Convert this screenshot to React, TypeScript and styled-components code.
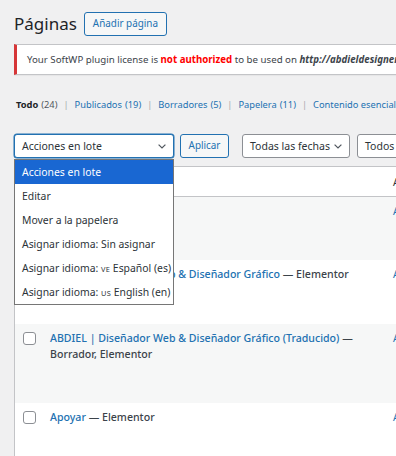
import styled, { createGlobalStyle } from "styled-components";

const GlobalStyle = createGlobalStyle`
  html, body {
    margin: 0;
    padding: 0;
    background: #f0f0f1;
    overflow: hidden;
  }
  body {
    width: 396px;
    height: 456px;
    font-family: "Noto Sans", "Open Sans", sans-serif;
    color: #3c434a;
  }
`;

const Page = styled.div`
  width: 640px;
  padding-left: 14px;
`;

/* ── Header ── */

const Header = styled.div`
  display: flex;
  align-items: center;
  gap: 7px;
  height: 24px;
  margin-top: 12px;
`;

const Title = styled.h1`
  margin: 0;
  font-size: 17px;
  font-weight: 400;
  line-height: 24px;
  color: #1d2327;
`;

const OutlineButton = styled.button`
  height: 24px;
  padding: 0 8px;
  border: 1px solid #2271b1;
  border-radius: 3px;
  background: #f6f7f7;
  color: #2271b1;
  font-family: inherit;
  font-size: 9.9px;
  line-height: 1;
  cursor: pointer;
`;

/* ── Notice ── */

const Notice = styled.div`
  box-sizing: border-box;
  width: 600px;
  height: 31px;
  margin-top: 8px;
  display: flex;
  align-items: center;
  padding: 0 10px;
  background: #fff;
  border: 1px solid #c3c4c7;
  border-left: 3px solid #d63638;
  box-shadow: 0 1px 1px rgba(0, 0, 0, 0.04);
  font-size: 9.7px;
  white-space: nowrap;
  color: #3c434a;
`;

const Danger = styled.strong`
  color: #f00;
  font-weight: 700;
`;

const Url = styled.em`
  font-weight: 700;
  color: #3c434a;
`;

/* ── Status filters ── */

const Filters = styled.ul`
  display: flex;
  margin: 22px 0 0;
  padding: 0 0 0 2px;
  list-style: none;
  font-size: 9.3px;
  line-height: 16px;
  white-space: nowrap;
  color: #646970;
`;

const FilterItem = styled.li`
  display: flex;
  gap: 3px;
`;

const FilterLink = styled.a<{ $current?: boolean }>`
  color: ${(p) => (p.$current ? "#1d2327" : "#2271b1")};
  font-weight: ${(p) => (p.$current ? 700 : 400)};
  text-decoration: none;
`;

const Count = styled.span<{ $current?: boolean }>`
  color: ${(p) => (p.$current ? "#50575e" : "#2271b1")};
  font-weight: 400;
`;

const Sep = styled.span`
  color: #a7aaad;
  padding: 0 6px 0 3px;
`;

/* ── Table nav ── */

const TableNav = styled.div`
  display: flex;
  align-items: center;
  height: 24px;
  margin-top: 21px;
`;

const BulkWrap = styled.div`
  position: relative;
  display: flex;
  gap: 6px;
  margin-right: 13px;
`;

const FilterWrap = styled.div`
  display: flex;
  gap: 7px;
`;

const Select = styled.div<{ $focused?: boolean; $width: number }>`
  box-sizing: border-box;
  width: ${(p) => p.$width}px;
  height: 24px;
  display: flex;
  align-items: center;
  justify-content: space-between;
  padding: 0 7px;
  background: #fff;
  border: 1px solid ${(p) => (p.$focused ? "#2271b1" : "#8c8f94")};
  box-shadow: ${(p) => (p.$focused ? "0 0 0 0.5px #2271b1" : "none")};
  border-radius: 3px;
  font-size: 10.5px;
  color: #2c3338;
  white-space: nowrap;
`;

const Chevron = () => (
  <svg width="8" height="5" viewBox="0 0 8 5" fill="none">
    <path d="M0.6 0.6 L4 4 L7.4 0.6" stroke="#50575e" strokeWidth="1.2" />
  </svg>
);

const ApplyButton = styled(OutlineButton)`
  width: 49px;
  padding: 0;
`;

const Dropdown = styled.ul`
  position: absolute;
  top: 25px;
  left: 0;
  z-index: 5;
  box-sizing: border-box;
  width: 160px;
  margin: 0;
  padding: 0;
  list-style: none;
  background: #fff;
  border: 1px solid #767676;
`;

const Option = styled.li<{ $active?: boolean }>`
  height: 24px;
  line-height: 24px;
  padding-left: 7px;
  font-size: 10.4px;
  white-space: nowrap;
  overflow: hidden;
  background: ${(p) => (p.$active ? "#1967d2" : "#fff")};
  color: ${(p) => (p.$active ? "#fff" : "#2c3338")};
`;

const Flag = styled.span`
  font-size: 7.4px;
  letter-spacing: 0.3px;
`;

/* ── Table ── */

const Table = styled.div`
  margin-top: 8px;
  background: #fff;
  border: 1px solid #c3c4c7;
  border-right: 0;
`;

const HeadRow = styled.div`
  display: grid;
  grid-template-columns: 29px 341px 1fr;
  align-items: center;
  height: 29px;
  border-bottom: 1px solid #c3c4c7;
  font-size: 10.4px;
  color: #2c3338;
`;

const Row = styled.div<{ $striped?: boolean; $height: number }>`
  display: grid;
  grid-template-columns: 29px 341px 1fr;
  align-items: start;
  height: ${(p) => p.$height}px;
  background: ${(p) => (p.$striped ? "#f6f7f7" : "#fff")};
`;

const CheckCell = styled.div<{ $head?: boolean }>`
  padding: ${(p) => (p.$head ? "0 0 0 8px" : "8px 0 0 8px")};
`;

const Checkbox = styled.span`
  display: block;
  box-sizing: border-box;
  width: 13px;
  height: 13px;
  background: #fff;
  border: 1px solid #8c8f94;
  border-radius: 3px;
`;

const TitleCell = styled.div`
  padding: 6px 8px 0 6px;
  font-size: 10.6px;
  line-height: 16px;
  font-weight: 500;
`;

const HeadTitle = styled.div`
  padding-left: 6px;
`;

const RowTitle = styled.a`
  color: #2271b1;
  text-decoration: none;
`;

const PostState = styled.span`
  color: #3c434a;
`;

const AuthorCell = styled.div`
  padding: 6px 0 0 8px;
  font-size: 10.4px;
  line-height: 16px;
  color: #2271b1;
  white-space: nowrap;
`;

const HeadAuthor = styled.div`
  padding-left: 8px;
`;

const rows = [
  { title: "Inicio", state: "Elementor", height: 63 },
  { title: "ABDIEL | Diseñador Web & Diseñador Gráfico", state: "Elementor", height: 64 },
  {
    title: "ABDIEL | Diseñador Web & Diseñador Gráfico (Traducido)",
    state: "Borrador, Elementor",
    height: 79,
  },
  { title: "Apoyar", state: "Elementor", height: 70 },
];

const filters = [
  { label: "Todo", count: 24, current: true },
  { label: "Publicados", count: 19 },
  { label: "Borradores", count: 5 },
  { label: "Papelera", count: 11 },
  { label: "Contenido esencial" },
];

export default function App() {
  return (
    <>
      <GlobalStyle />
      <Page>
        <Header>
          <Title>Páginas</Title>
          <OutlineButton>Añadir página</OutlineButton>
        </Header>

        <Notice>
          Your SoftWP plugin license is&nbsp;<Danger>not authorized</Danger>&nbsp;to be used on&nbsp;
          <Url>http://abdieldesigner.com</Url>
        </Notice>

        <Filters>
          {filters.map((f, i) => (
            <FilterItem key={f.label}>
              <FilterLink $current={f.current}>{f.label}</FilterLink>
              {f.count !== undefined && <Count $current={f.current}>({f.count})</Count>}
              {i < filters.length - 1 && <Sep>|</Sep>}
            </FilterItem>
          ))}
        </Filters>

        <TableNav>
          <BulkWrap>
            <Select $focused $width={160}>
              Acciones en lote
              <Chevron />
            </Select>
            <ApplyButton>Aplicar</ApplyButton>
            <Dropdown>
              <Option $active>Acciones en lote</Option>
              <Option>Editar</Option>
              <Option>Mover a la papelera</Option>
              <Option>Asignar idioma: Sin asignar</Option>
              <Option>
                Asignar idioma: <Flag>VE</Flag> Español (es)
              </Option>
              <Option>
                Asignar idioma: <Flag>US</Flag> English (en)
              </Option>
            </Dropdown>
          </BulkWrap>
          <FilterWrap>
            <Select $width={108}>
              Todas las fechas
              <Chevron />
            </Select>
            <Select $width={150}>
              Todos los idiomas
              <Chevron />
            </Select>
          </FilterWrap>
        </TableNav>

        <Table>
          <HeadRow>
            <CheckCell $head>
              <Checkbox />
            </CheckCell>
            <HeadTitle>Título</HeadTitle>
            <HeadAuthor>Autor</HeadAuthor>
          </HeadRow>
          {rows.map((r, i) => (
            <Row key={i} $striped={i % 2 === 0} $height={r.height}>
              <CheckCell>
                <Checkbox />
              </CheckCell>
              <TitleCell>
                <RowTitle>{r.title}</RowTitle>
                <PostState> — {r.state}</PostState>
              </TitleCell>
              <AuthorCell>Abdiel</AuthorCell>
            </Row>
          ))}
        </Table>
      </Page>
    </>
  );
}
